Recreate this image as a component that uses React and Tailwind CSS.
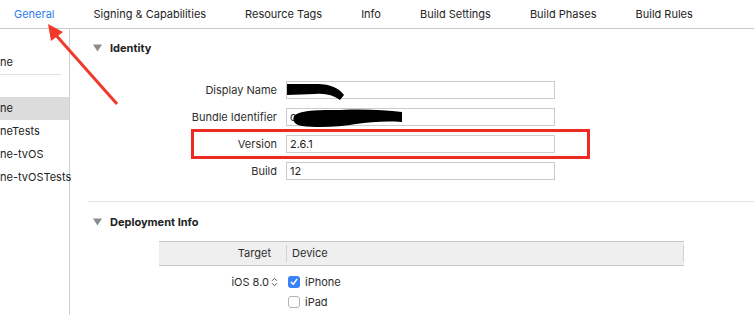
import React from 'react';

const tabs = ['General', 'Signing & Capabilities', 'Resource Tags', 'Info', 'Build Settings', 'Build Phases', 'Build Rules'];

const fields = [
  { label: 'Display Name', value: '' },
  { label: 'Bundle Identifier', value: 'c' },
  { label: 'Version', value: '2.6.1' },
  { label: 'Build', value: '12' },
];

const targets = ['ne', 'neTests', 'ne-tvOS', 'ne-tvOSTests'];

const Disclosure = () => (
  <svg width="9" height="8" viewBox="0 0 9 8">
    <path d="M0 0.5 H9 L4.5 7.5 Z" fill="#8a8a8a" />
  </svg>
);

const SectionHeader = ({ title }) => (
  <div className="h-[20px] pl-[23px] flex items-center gap-[8px]">
    <Disclosure />
    <span className="text-[11px] font-bold text-[#222]">{title}</span>
  </div>
);

const Checkbox = ({ checked }) =>
  checked ? (
    <div className="w-[12px] h-[12px] rounded-[3px] bg-[#3a82f7] flex items-center justify-center">
      <svg width="8" height="8" viewBox="0 0 8 8">
        <path d="M1.3 4.2 L3.2 6.2 L6.8 1.4" fill="none" stroke="white" strokeWidth="1.5" strokeLinecap="round" strokeLinejoin="round" />
      </svg>
    </div>
  ) : (
    <div className="w-[12px] h-[12px] rounded-[3px] border border-[#b5b5b5] bg-white" />
  );

export default function App() {
  return (
    <div className="w-[754px] h-[315px] bg-white overflow-hidden relative font-['Inter',sans-serif] text-[#222]">
      {/* tab bar */}
      <div className="h-[29px] border-b border-[#c9c9c9] flex items-center pl-[14px] gap-[39px] text-[11px]">
        {tabs.map((t, i) => (
          <span key={t} className={i === 0 ? 'text-[#2f7bf0]' : 'text-[#242424]'}>
            {t}
          </span>
        ))}
      </div>

      <div className="flex h-[286px]">
        {/* targets sidebar */}
        <aside className="w-[70px] shrink-0 border-r border-[#cfcfcf] text-[11px] text-[#222]">
          <div className="mt-[22px] h-[22px] flex items-center">ne</div>
          <div className="h-px bg-[#e2e2e2] mr-[8px] mt-px" />
          <div className="h-[22px]" />
          {targets.map((t, i) => (
            <div key={t} className={`h-[23px] flex items-center whitespace-nowrap ${i === 0 ? 'bg-[#dcdcdc]' : ''}`}>
              {t}
            </div>
          ))}
        </aside>

        {/* general settings */}
        <main className="flex-1 min-w-0">
          <div className="mt-[9px]">
            <SectionHeader title="Identity" />
          </div>

          <div className="mt-[23px] flex flex-col gap-[9px]">
            {fields.map((f) => (
              <div key={f.label} className="flex items-center h-[18px]">
                <div className="w-[207px] text-right text-[11px] text-[#2e2e2e]">{f.label}</div>
                <div className="ml-[9px] w-[269px] h-[18px] border border-[#cbcbcb] flex items-center pl-[3px] text-[11px] text-[#1e1e1e]">
                  {f.value}
                </div>
              </div>
            ))}
          </div>

          <div className="mt-[21px] ml-[18px] h-px bg-[#e4e4e4]" />

          <div className="mt-[10px]">
            <SectionHeader title="Deployment Info" />
          </div>

          <div className="mt-[9px] ml-[89px] w-[525px]">
            <div className="h-[25px] bg-[#efefef] border-y border-[#c6c6c6] flex items-center text-[11px] text-[#2e2e2e]">
              <div className="w-[127px] text-right pr-[15px]">Target</div>
              <div className="w-px h-[17px] bg-[#d2d2d2]" />
              <div className="pl-[5px] flex-1">Device</div>
              <div className="w-px h-[17px] bg-[#d2d2d2]" />
            </div>
            <div className="mt-[6px] flex text-[11px] text-[#2e2e2e]">
              <div className="w-[127px] h-[20px] flex items-center justify-end pr-[8px] gap-[2px]">
                <span>iOS 8.0</span>
                <svg width="7" height="10" viewBox="0 0 7 10">
                  <path d="M1 3.8 L3.5 1.3 L6 3.8 M1 6.2 L3.5 8.7 L6 6.2" fill="none" stroke="#555" strokeWidth="1" />
                </svg>
              </div>
              <div className="pl-[2px] flex flex-col">
                <div className="h-[20px] flex items-center gap-[5px]">
                  <Checkbox checked />
                  <span>iPhone</span>
                </div>
                <div className="h-[20px] flex items-center gap-[5px]">
                  <Checkbox />
                  <span>iPad</span>
                </div>
              </div>
            </div>
          </div>
        </main>
      </div>

      {/* annotations: red highlight box, arrow and redaction scribbles */}
      <div className="absolute left-[191px] top-[129px] w-[399px] h-[30px] border-[3px] border-[#ee2b23]" />
      <svg className="absolute inset-0 pointer-events-none" width="754" height="315" viewBox="0 0 754 315">
        <line x1="117" y1="104" x2="54" y2="33" stroke="#f0392b" strokeWidth="3" />
        <path d="M48 24 L51 41 L63 32 Z" fill="#f0392b" />
        <path d="M287 84 L318 84 C 330 84, 339 88, 344 95 L340 100 C 333 95, 325 93, 315 94 L287 95 Z" fill="#000" />
        <path d="M294 116 C 300 110, 318 110, 340 110 C 365 109, 385 110, 402 112 L402 122 C 385 121, 370 122, 356 124 C 340 127, 318 128, 302 126 C 295 125, 292 121, 294 116 Z" fill="#000" />
      </svg>
    </div>
  );
}
